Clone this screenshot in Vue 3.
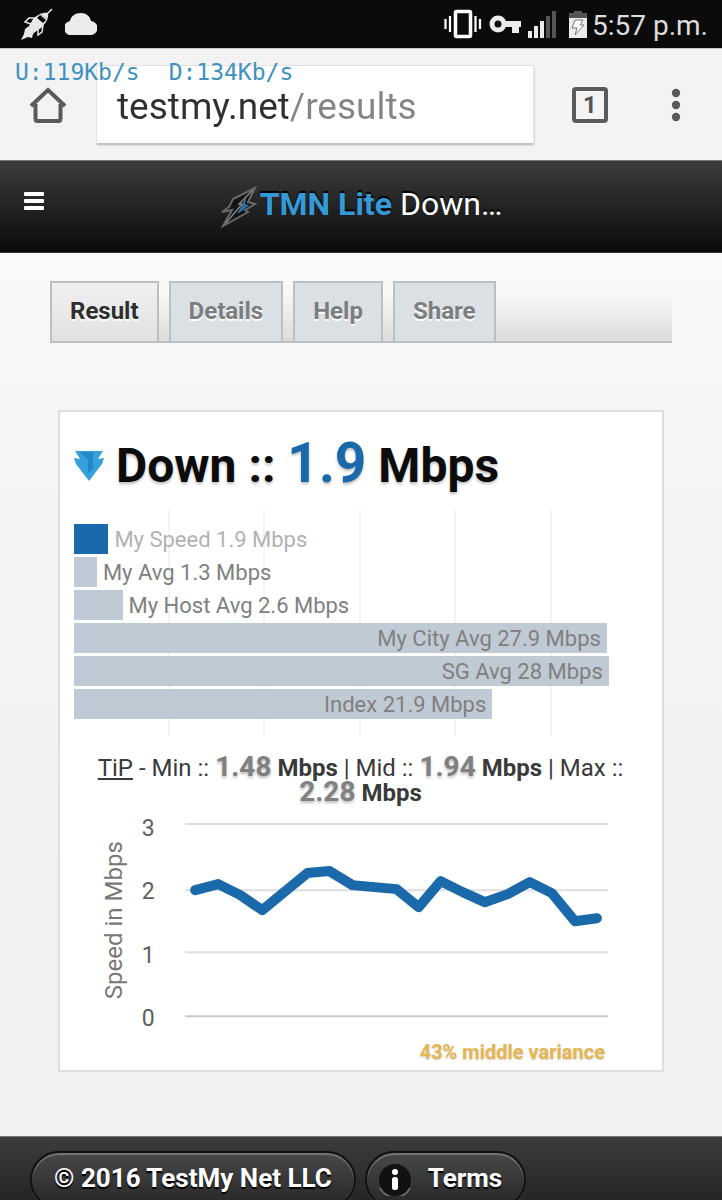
<script setup>
import { ref } from 'vue'

const url = ref('testmy.net/results')
const tabs = ['Result', 'Details', 'Help', 'Share']
const active = ref('Result')

const scaleMax = 30
const bars = [
  { label: 'My Speed 1.9 Mbps', value: 1.8, kind: 'mine' },
  { label: 'My Avg 1.3 Mbps', value: 1.2, kind: 'short' },
  { label: 'My Host Avg 2.6 Mbps', value: 2.54, kind: 'short' },
  { label: 'My City Avg 27.9 Mbps', value: 27.9, kind: 'long' },
  { label: 'SG Avg 28 Mbps', value: 28, kind: 'long' },
  { label: 'Index 21.9 Mbps', value: 21.9, kind: 'long' }
]
const barWidth = (v) => `${(v / scaleMax) * 100}%`

const gridRows = [
  { label: '3', y: 12, textY: 24 },
  { label: '2', y: 78, textY: 87 },
  { label: '1', y: 140, textY: 151 },
  { label: '0', y: 204, textY: 214 }
]
const points = [
  [121, 78], [144, 72], [166, 83], [188, 98], [211, 79], [233, 61], [255, 59], [278, 73],
  [300, 75], [322, 77], [344, 95], [366, 69], [388, 80], [410, 90], [433, 82],
  [455, 70], [477, 81], [500, 109], [522, 106]
].map((p) => p.join(',')).join(' ')
</script>

<template>
  <div class="screen">
    <header class="status">
      <div class="group">
        <svg class="rocket" width="34" height="34" viewBox="0 0 34 34" aria-hidden="true">
          <path d="M32 2 L26 8" stroke="#e8e8e8" stroke-width="1.5" />
          <path d="M28 6 C23 5 17 8 13 12 L9 19 L15 25 L21 21 C25 17 29 12 28 6Z" fill="#e8e8e8" />
          <path d="M21 7 L27 12 L23 16 L17 11Z" fill="#0b0b0b" />
          <path d="M20 7 L27 13 M15 11 L9 11 L5 15 L11 17 M23 18 L22 25 L18 28 L18 22" fill="none" stroke="#e8e8e8" stroke-width="1.5" />
          <path d="M9 19 L5 22 L4 27 L1 33 L8 30 L12 31 L13 27 L16 24Z" fill="#e8e8e8" />
        </svg>
        <svg width="32" height="22" viewBox="0 0 32 22" aria-hidden="true">
          <path d="M7 22 A7 7 0 0 1 5 8 C6 3 10 0 16 0 C21 0 25 3 26 8 A7 7 0 0 1 25 22Z" fill="#ececec" />
        </svg>
      </div>
      <div class="group right">
        <svg width="148" height="32" viewBox="0 0 148 32" aria-hidden="true">
          <rect x="11.500" y="3.500" width="15" height="25" rx="1" fill="none" stroke="#fff" stroke-width="3.500" />
          <path d="M1.500 11 V21 M6 8 V24 M31.500 8 V24 M36 11 V21" stroke="#fff" stroke-width="2.200" />
          <circle cx="54" cy="16" r="6" fill="none" stroke="#ececec" stroke-width="5" />
          <path d="M61 13 H77 V19 H75 V25 H68 V19 H61Z" fill="#ececec" />
          <path d="M84 23 h4 v7 h-4z M90 18 h4 v12 h-4z M96 13 h4 v17 h-4z" fill="#ececec" />
          <path d="M102 8 h4 v22 h-4z M108 3 h4 v27 h-4z" fill="#555" />
          <path d="M125 5 h5 v-2 h8 v2 h5 v5 h-18z" fill="#555" />
          <path d="M125 10 H143 V30 H125Z" fill="#ececec" />
          <path d="M131 12 H139 L136 17 H140 L131 27 L133 20 H128Z" fill="#fff" stroke="#777" stroke-width="1" />
        </svg>
        <time class="clock">5:57 p.m.</time>
      </div>
    </header>

    <div class="toolbar">
      <div class="rates"><span>U:119Kb/s</span><span>D:134Kb/s</span></div>
      <button class="icon-btn" aria-label="Home">
        <svg width="38" height="38" viewBox="0 0 38 38">
          <path d="M6.500 18 V33 Q6.500 35 8.500 35 H29.500 Q31.500 35 31.500 33 V18 M2 20 L19 4 L36 20" fill="none" stroke="#5a5a5a" stroke-width="4" />
        </svg>
      </button>
      <div class="address">
        <input v-model="url" type="text" aria-label="Address" spellcheck="false" />
      </div>
      <button class="count" aria-label="Open tabs: 1">1</button>
      <button class="icon-btn more" aria-label="More options">
        <svg width="10" height="34" viewBox="0 0 10 34">
          <circle cx="5" cy="5" r="4.200" fill="#5a5a5a" />
          <circle cx="5" cy="17" r="4.200" fill="#5a5a5a" />
          <circle cx="5" cy="29" r="4.200" fill="#5a5a5a" />
        </svg>
      </button>
    </div>

    <div class="banner">
      <button class="menu" aria-label="Menu"><i></i><i></i><i></i></button>
      <h1>
        <svg width="38" height="42" viewBox="0 0 38 42" aria-hidden="true">
          <path d="M35 2 L13 13 L9 21 L2 26 L12 24 L3 40 L28 26 L25 24 L35 18 L28 16Z" fill="#121212" stroke="#686868" stroke-width="2" />
          <path d="M27 9 L17 28 L22 25 L29 19 L25 18Z" fill="#2c6ea5" />
          <path d="M33 4 L19 18 L22 18 L6 37" fill="none" stroke="#808080" stroke-width="1.500" />
        </svg>
        <span><b>TMN Lite</b> Down…</span>
      </h1>
    </div>

    <main>
      <nav class="tabs" role="tablist">
        <button
          v-for="t in tabs"
          :key="t"
          role="tab"
          :aria-selected="active === t"
          :class="{ on: active === t }"
          @click="active = t"
        >{{ t }}</button>
      </nav>

      <section class="card">
        <h2>
          <svg width="30" height="32" viewBox="0 0 30 32" aria-hidden="true">
            <path d="M1 1 H29 L24 9 L30 8 L28 14 L15 31 L2 14 L0 8 L6 9Z" fill="#35a0dc" />
            <path d="M6 2 H19 V19 L14 23 L14 10Z" fill="#2388c6" />
          </svg>
          <span>Down :: <em>1.9</em> Mbps</span>
        </h2>

        <div class="bars">
          <div class="grid" aria-hidden="true"><i v-for="n in 5" :key="n"></i></div>
          <div v-for="b in bars" :key="b.label" class="row" :class="b.kind">
            <div class="bar" :style="{ width: barWidth(b.value) }">
              <span v-if="b.kind === 'long'">{{ b.label }}</span>
            </div>
            <span v-if="b.kind !== 'long'">{{ b.label }}</span>
          </div>
        </div>

        <p class="tip">
          <a href="#tip">TiP</a> - Min :: <b><em>1.48</em> Mbps</b> | Mid :: <b><em>1.94</em> Mbps</b> | Max :: <b><em>2.28</em> Mbps</b>
        </p>

        <svg class="chart" viewBox="0 0 572 226" role="img" aria-label="Speed in Mbps over time">
          <text class="axis" transform="translate(48 108) rotate(-90)" text-anchor="middle">Speed in Mbps</text>
          <g v-for="r in gridRows" :key="r.label">
            <text x="74" :y="r.textY" text-anchor="middle">{{ r.label }}</text>
            <line x1="111" x2="533" :y1="r.y" :y2="r.y" :class="{ base: r.label === '0' }" />
          </g>
          <polyline :points="points" />
        </svg>
        <p class="variance">43% middle variance</p>
      </section>
    </main>

    <footer>
      <a class="pill" href="#top">© 2016 TestMy Net LLC</a>
      <a class="pill terms" href="#terms">
        <svg width="36" height="36" viewBox="0 0 36 36" aria-hidden="true">
          <circle cx="18" cy="20" r="16" fill="#111" />
          <path d="M3 28 A17 17 0 0 0 33 28" fill="none" stroke="#777" stroke-width="1.500" />
          <circle cx="18" cy="12" r="3" fill="#fff" />
          <rect x="15" y="17" width="6" height="13" rx="2.500" fill="#fff" />
        </svg>
        <span>Terms</span>
      </a>
    </footer>
  </div>
</template>

<style>
body {
  margin: 0;
  background: #f2f2f2;
}
</style>

<style scoped>
* {
  box-sizing: border-box;
}
.screen {
  display: flex;
  flex-direction: column;
  height: 100vh;
  overflow: hidden;
  font-family: Roboto, "Liberation Sans", sans-serif;
  background: #f2f2f2;
}
button {
  padding: 0;
  border: 0;
  background: none;
  font-family: inherit;
}
svg {
  display: block;
  flex: none;
}
.status {
  display: flex;
  flex: none;
  justify-content: space-between;
  height: 48px;
  padding: 0 14px 0 20px;
  background: #0b0b0b;
}
.group {
  display: flex;
  align-items: center;
  gap: 11px;
}
.group.right {
  gap: 0;
}
.clock {
  color: #ddd;
  font-size: 28px;
  line-height: 32px;
  padding-top: 4px;
}
.toolbar {
  position: relative;
  display: flex;
  flex: none;
  align-items: center;
  height: 112px;
  padding: 0 41px 0 29px;
  background: #f3f3f3;
  border-top: 1px solid #ccc;
}
.rates {
  position: absolute;
  left: 15px;
  top: 9px;
  display: flex;
  gap: 29px;
  color: #4191c0;
  font-family: "DejaVu Sans Mono", monospace;
  font-size: 23px;
  line-height: 28px;
}
.address {
  flex: 1;
  height: 80px;
  margin: 0 38px 0 29px;
  border: 1px solid #e2e2e2;
  border-bottom: 2px solid #c4c4c4;
  border-radius: 2px;
  background: #fff;
  box-shadow: 1px 1px 2px #ddd;
}
.address input {
  display: block;
  width: 100%;
  height: 100%;
  padding: 4px 0 0 20px;
  border: 0;
  outline: 0;
  color: transparent;
  background: linear-gradient(90deg, #303030 191px, #858585 191px);
  background-clip: text;
  -webkit-background-clip: text;
  font-family: inherit;
  font-size: 37px;
}
.count {
  width: 36px;
  height: 36px;
  border: 4px solid #5a5a5a;
  border-radius: 4px;
  color: #555;
  font-size: 24px;
  font-weight: 700;
  line-height: 28px;
}
.more {
  margin-left: 63px;
}
.banner {
  position: relative;
  display: flex;
  flex: none;
  align-items: center;
  justify-content: center;
  height: 93px;
  background: linear-gradient(#3c3c3c, #0a0a0a);
  border-top: 1px solid #777;
  border-bottom: 1px solid #333;
}
.menu {
  position: absolute;
  left: 24px;
  top: 31px;
  display: flex;
  flex-direction: column;
  gap: 3px;
  width: 20px;
}
.menu i {
  height: 4px;
  border-radius: 1px;
  background: #fff;
}
h1 {
  display: flex;
  align-items: center;
  gap: 2px;
  margin: 0;
  color: #fff;
  font-size: 32px;
  font-weight: 400;
  line-height: 38px;
  text-shadow: 0 -2px 1px #000;
}
h1 span {
  padding-bottom: 6px;
}
h1 b {
  color: #3599d8;
  font-weight: 700;
}
main {
  flex: none;
  padding: 28px 50px 64px;
  background: linear-gradient(#f9f9f9, #f3f3f3 35%, #f1f1f1);
}
.tabs {
  display: flex;
  gap: 10px;
  height: 62px;
  border-bottom: 2px solid #b9bfc3;
  background: linear-gradient(transparent 20%, #dcdcdc);
}
.tabs button {
  padding: 0 18px 2px;
  border: 2px solid #b9bfc3;
  border-bottom: 0;
  background: #dbe0e4;
  color: #7b7e80;
  font-size: 24px;
  font-weight: 700;
  text-shadow: 0 2px 0 #fff;
}
.tabs .on {
  background: linear-gradient(#f0f0f0, #e2e2e2);
  color: #2e2e2e;
}
.card {
  margin: 67px 8px 0;
  padding: 26px 15px 6px 14px;
  border: 2px solid #dedede;
  background: #fff;
}
h2 {
  display: flex;
  align-items: center;
  gap: 12px;
  height: 56px;
  margin: 0;
  color: #0c0c0c;
  font-size: 48px;
  font-weight: 700;
  line-height: 56px;
  white-space: nowrap;
  text-shadow: 0 2px 3px #bbb;
}
h2 em {
  color: #1a69ab;
  font-size: 55px;
  font-style: normal;
}
h2 span {
  padding-bottom: 4px;
}
.bars {
  position: relative;
  display: flex;
  flex-direction: column;
  gap: 3px;
  margin-top: 16px;
  padding: 14px 0 17px;
}
.grid {
  position: absolute;
  inset: 0;
  display: grid;
  grid-template-columns: repeat(6, 1fr);
}
.grid i {
  border-right: 2px solid #f3f3f3;
}
.row {
  position: relative;
  display: flex;
  align-items: center;
  gap: 6px;
  height: 30px;
  color: #808080;
  font-size: 22px;
  line-height: 30px;
  white-space: nowrap;
}
.row span {
  padding-top: 2px;
}
.bar {
  display: flex;
  flex: none;
  align-items: center;
  justify-content: flex-end;
  height: 100%;
  padding-right: 6px;
  background: #c0cad5;
}
.mine {
  color: #b2b2b2;
}
.mine .bar {
  background: #1a69ab;
}
.tip {
  margin: 19px 0 7px;
  color: #3a3a3a;
  font-size: 24px;
  line-height: 24px;
  text-align: center;
}
.tip a {
  color: inherit;
}
.tip em {
  color: #808080;
  font-size: 28px;
  font-style: normal;
  line-height: 24px;
  text-shadow: 0 2px 3px #bbb;
}
.chart {
  width: 100%;
  height: auto;
}
.chart text {
  font-size: 23px;
  fill: #606060;
}
.chart .axis {
  font-size: 24px;
  fill: #777;
}
.chart line {
  stroke: #dedede;
  stroke-width: 2;
}
.chart .base {
  stroke: #c4c9ce;
}
.chart polyline {
  fill: none;
  stroke: #1a69ab;
  stroke-width: 10;
  stroke-linecap: round;
  stroke-linejoin: round;
}
.variance {
  margin: 2px 42px 0 0;
  color: #e6b650;
  font-size: 20px;
  font-weight: 700;
  line-height: 24px;
  text-align: right;
  text-shadow: 0 1px 2px #ccc;
}
footer {
  display: flex;
  flex: none;
  gap: 9px;
  padding: 14px 30px;
  border-top: 1px solid #777;
  background: linear-gradient(#3c3c3c, #1c1c1c);
}
.pill {
  display: flex;
  align-items: center;
  gap: 15px;
  height: 58px;
  padding: 0 22px 4px;
  border: 2px solid #111;
  border-radius: 29px;
  background: linear-gradient(#484848, #262626);
  box-shadow: inset 0 2px 1px #777, 0 1px 0 #555;
  color: #fff;
  font-size: 26px;
  font-weight: 700;
  text-decoration: none;
  text-shadow: 0 2px 1px #000;
}
.terms {
  padding-left: 10px;
}
</style>
